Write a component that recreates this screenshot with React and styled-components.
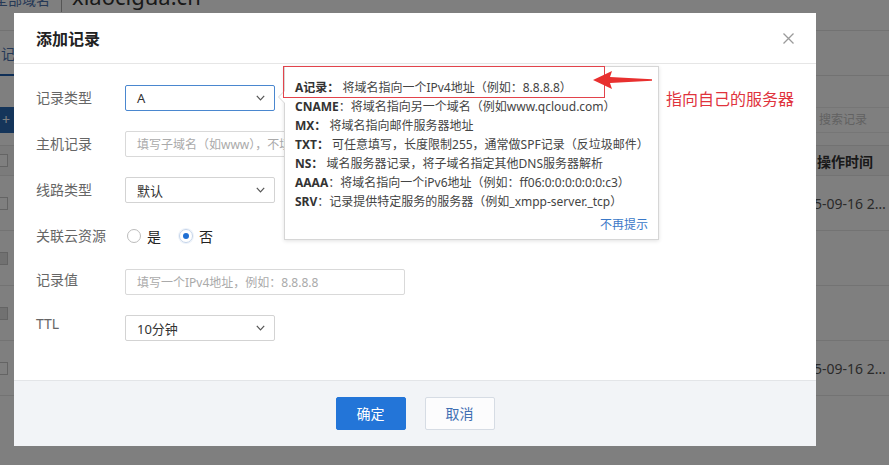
import React from 'react';
import styled, { createGlobalStyle } from 'styled-components';

const FONT = '"Noto Sans", "Noto Sans CJK SC", sans-serif';

const Global = createGlobalStyle`
  html, body { margin: 0; padding: 0; }
  body { font-family: ${FONT}; width: 889px; height: 465px; overflow: hidden; background: #fff; }
  * { box-sizing: border-box; }
`;

const Page = styled.div`
  position: relative;
  width: 889px;
  height: 465px;
  overflow: hidden;
  background: #fff;
  color: #333;
`;

/* ---------- background page ---------- */
const BgApp = styled.div`
  display: flex;
  flex-direction: column;
`;

const TopBar = styled.div`
  display: flex;
  align-items: flex-start;
  height: 46px;
  margin-top: -15px;
  border-bottom: 1px solid #e4e4e4;
`;

const Crumb = styled.span`
  font-size: 14px;
  line-height: 20px;
  margin: 5px 0 0 -6px;
  color: #4d72ad;
  white-space: nowrap;
`;

const VSep = styled.span`
  width: 1px;
  height: 27px;
  background: #aaa;
  margin: 0 10px 0 11px;
`;

const Domain = styled.span`
  font-size: 22px;
  line-height: 22px;
  color: #333;
`;

const TabBar = styled.div`
  height: 45px;
  display: flex;
  align-items: flex-end;
  border-bottom: 1px solid #e5e5e5;
`;

const Tab = styled.div`
  font-size: 14px;
  line-height: 20px;
  padding: 0 10px 10px 1px;
  color: #4a72b0;
  border-bottom: 2px solid #1f5fae;
  margin-bottom: -1px;
`;

const Toolbar = styled.div`
  margin-top: 31px;
  height: 26px;
  display: flex;
  justify-content: space-between;
`;

const AddButton = styled.div`
  margin-left: -7px;
  padding: 0 10px 0 9px;
  background: #2a6ab4;
  color: #fff;
  font-size: 14px;
  line-height: 26px;
  white-space: nowrap;
`;

const SearchBox = styled.div`
  width: 200px;
  margin-right: -119px;
  border: 1px solid #ececec;
  background: #fff;
  color: #c4c4c4;
  font-size: 12px;
  line-height: 24px;
  padding-left: 10px;
`;

const Table = styled.div`
  margin-top: 12px;
  border-top: 1px solid #e4e4e4;
`;

const TRow = styled.div`
  display: grid;
  grid-template-columns: 14px 1fr 99px;
  align-items: center;
  height: ${p => (p.$head ? 30 : 55)}px;
  background: ${p => (p.$head ? '#f7f7f7' : '#fff')};
  border-bottom: 1px solid #e6e6e6;
`;

const Check = styled.span`
  display: block;
  width: 13px;
  height: 13px;
  margin-left: -5px;
  border: 1px solid #c8c8c8;
  background: ${p => (p.$disabled ? '#e2e2e2' : '#fff')};
`;

const HeadCell = styled.div`
  grid-column: 3;
  padding-left: 27px;
  font-size: 14px;
  font-weight: 700;
  color: #333;
  white-space: nowrap;
`;

const DateCell = styled.div`
  grid-column: 3;
  font-size: 14px;
  color: #555;
  white-space: nowrap;
  overflow: hidden;
  text-overflow: ellipsis;
  padding-right: 2px;
`;

const Backdrop = styled.div`
  position: absolute;
  inset: 0;
  background: rgba(0, 0, 0, 0.5);
`;

/* ---------- modal ---------- */
const Modal = styled.div`
  position: absolute;
  left: 14px;
  top: 13px;
  width: 802px;
  height: 433px;
  background: #fff;
  display: flex;
  flex-direction: column;
`;

const Header = styled.div`
  flex: none;
  height: 51px;
  display: flex;
  align-items: center;
  justify-content: space-between;
  padding: 0 21px 0 22px;
  border-bottom: 1px solid #e6e6e6;
`;

const Title = styled.h2`
  margin: 0;
  font-size: 16px;
  font-weight: 600;
  color: #222;
`;

const Close = styled.span`
  display: flex;
  width: 13px;
  height: 13px;
`;

const Body = styled.div`
  flex: 1;
  padding: 21px 22px 0;
  display: flex;
  flex-direction: column;
  gap: 20px;
`;

const FormRow = styled.div`
  display: flex;
  align-items: center;
  height: 26px;
`;

const Label = styled.div`
  width: 89px;
  flex: none;
  font-size: 14px;
  line-height: 26px;
  color: #666;
  margin-top: ${p => p.$shift || 0}px;
`;

const Select = styled.div`
  width: 150px;
  height: 26px;
  display: flex;
  align-items: center;
  justify-content: space-between;
  padding: 0 9px 0 11px;
  border: 1px solid ${p => (p.$focus ? '#4a87cf' : '#d3d3d3')};
  border-radius: 2px;
  font-size: 13px;
  color: #333;
`;

const Input = styled.div`
  width: 280px;
  height: 26px;
  display: flex;
  align-items: center;
  padding: 0 10px 0 11px;
  border: 1px solid #d9d9d9;
  border-radius: 2px;
  font-size: 12px;
  color: #aaa;
  white-space: nowrap;
  overflow: hidden;
`;

const RadioGroup = styled.div`
  display: flex;
  align-items: center;
`;

const RadioItem = styled.label`
  display: flex;
  align-items: center;
  gap: 6px;
  margin: 0 16px 0 2px;
  font-size: 14px;
  color: #222;
`;

const Circle = styled.span`
  width: 14px;
  height: 14px;
  border-radius: 50%;
  border: 1px solid ${p => (p.$on ? '#c5d5ea' : '#bcbcbc')};
  box-shadow: ${p => (p.$on ? '0 0 0 1px #eef3fa' : 'none')};
  display: flex;
  align-items: center;
  justify-content: center;
  &::after {
    content: '';
    width: 6px;
    height: 6px;
    border-radius: 50%;
    background: ${p => (p.$on ? '#1f6fd3' : 'transparent')};
  }
`;

const Footer = styled.div`
  flex: none;
  height: 66px;
  display: flex;
  align-items: center;
  justify-content: center;
  gap: 19px;
  border-top: 1px solid #e3e5e8;
  background: #f2f4f7;
  padding-bottom: 1px;
`;

const Button = styled.button`
  width: 70px;
  height: 33px;
  border-radius: 2px;
  font-family: ${FONT};
  font-size: 14px;
  border: 1px solid ${p => (p.$primary ? '#2375d8' : '#d6dce4')};
  background: ${p => (p.$primary ? '#2375d8' : '#fcfcfd')};
  color: ${p => (p.$primary ? '#fff' : '#3f6fb3')};
  padding: 0;
`;

/* ---------- popover ---------- */
const Popover = styled.div`
  position: absolute;
  left: 284px;
  top: 66px;
  width: 375px;
  height: 174px;
  background: #fff;
  border: 1px solid #d6d6d6;
  box-shadow: 0 1px 4px rgba(0, 0, 0, 0.12);
  padding: 11px 10px 6px 10px;
  display: flex;
  flex-direction: column;
  &::before, &::after {
    content: '';
    position: absolute;
    top: 24px;
    border: 6px solid transparent;
  }
  &::before { left: -13px; border-right-color: #d6d6d6; }
  &::after { left: -12px; border-right-color: #fff; }
`;

const TipLine = styled.div`
  font-size: 12px;
  line-height: 19px;
  color: #444;
  white-space: nowrap;
`;

const Key = styled.b`
  font-weight: 700;
  color: #333;
`;

const Link = styled.a`
  align-self: flex-end;
  margin-top: 4px;
  font-size: 12px;
  line-height: 19px;
  color: #3a78c8;
  text-decoration: none;
`;

/* ---------- annotations ---------- */
const RedBox = styled.div`
  position: absolute;
  left: 283px;
  top: 66px;
  width: 322px;
  height: 32px;
  border: 1.5px solid #e2434b;
`;

const RedArrow = styled.svg`
  position: absolute;
  left: 590px;
  top: 66px;
`;

const RedNote = styled.div`
  position: absolute;
  left: 666px;
  top: 87px;
  font-size: 16px;
  line-height: 24px;
  color: #e0333d;
  white-space: nowrap;
`;

const Chevron = () => (
  <svg width="9" height="6" viewBox="0 0 9 6">
    <polyline points="0.8,0.8 4.5,4.8 8.2,0.8" fill="none" stroke="#555" strokeWidth="1.2" />
  </svg>
);

const tips = [
  ['A记录：', ' 将域名指向一个IPv4地址（例如：8.8.8.8）'],
  ['CNAME', '：将域名指向另一个域名（例如www.qcloud.com）'],
  ['MX：', ' 将域名指向邮件服务器地址'],
  ['TXT：', ' 可任意填写，长度限制255，通常做SPF记录（反垃圾邮件）'],
  ['NS：', ' 域名服务器记录，将子域名指定其他DNS服务器解析'],
  ['AAAA', '：将域名指向一个iPv6地址（例如：ff06:0:0:0:0:0:0:c3）'],
  ['SRV', '：记录提供特定服务的服务器（例如_xmpp-server._tcp）'],
];

const rows = [
  { date: true, disabled: false },
  { date: false, disabled: true },
  { date: false, disabled: true },
  { date: true, disabled: false },
];

export default function App() {
  return (
    <Page>
      <Global />
      <BgApp>
        <TopBar>
          <Crumb>全部域名</Crumb>
          <VSep />
          <Domain>xiaocigua.cn</Domain>
        </TopBar>
        <TabBar>
          <Tab>记录管理</Tab>
        </TabBar>
        <Toolbar>
          <AddButton>+ 添加记录</AddButton>
          <SearchBox>搜索记录</SearchBox>
        </Toolbar>
        <Table>
          <TRow $head>
            <Check />
            <HeadCell>操作时间</HeadCell>
          </TRow>
          {rows.map((r, i) => (
            <TRow key={i}>
              <Check $disabled={r.disabled} />
              {r.date && <DateCell>2015-09-16 20:31:45</DateCell>}
            </TRow>
          ))}
        </Table>
      </BgApp>

      <Backdrop />

      <Modal>
        <Header>
          <Title>添加记录</Title>
          <Close>
            <svg width="13" height="13" viewBox="0 0 13 13">
              <path d="M1.5 1.5 L11.5 11.5 M11.5 1.5 L1.5 11.5" stroke="#9a9a9a" strokeWidth="1.3" />
            </svg>
          </Close>
        </Header>
        <Body>
          <FormRow>
            <Label>记录类型</Label>
            <Select $focus>
              <span>A</span>
              <Chevron />
            </Select>
          </FormRow>
          <FormRow>
            <Label>主机记录</Label>
            <Input>填写子域名（如www），不填写时默认为@</Input>
          </FormRow>
          <FormRow>
            <Label>线路类型</Label>
            <Select>
              <span>默认</span>
              <Chevron />
            </Select>
          </FormRow>
          <FormRow>
            <Label>关联云资源</Label>
            <RadioGroup>
              <RadioItem>
                <Circle />是
              </RadioItem>
              <RadioItem>
                <Circle $on />否
              </RadioItem>
            </RadioGroup>
          </FormRow>
          <FormRow>
            <Label $shift={-5}>记录值</Label>
            <Input>填写一个IPv4地址，例如：8.8.8.8</Input>
          </FormRow>
          <FormRow>
            <Label $shift={-8}>TTL</Label>
            <Select>
              <span>10分钟</span>
              <Chevron />
            </Select>
          </FormRow>
        </Body>
        <Footer>
          <Button $primary>确定</Button>
          <Button>取消</Button>
        </Footer>
      </Modal>

      <Popover>
        {tips.map(([k, v]) => (
          <TipLine key={k}>
            <Key>{k}</Key>
            {v}
          </TipLine>
        ))}
        <Link>不再提示</Link>
      </Popover>

      <RedBox />
      <RedArrow width="66" height="26" viewBox="0 0 66 26">
        <path d="M3 14 L22 5 L20 11 L62 13.2 L62 14.8 L20 17 L22 23 Z" fill="#e8302f" />
      </RedArrow>
      <RedNote>指向自己的服务器</RedNote>
    </Page>
  );
}
